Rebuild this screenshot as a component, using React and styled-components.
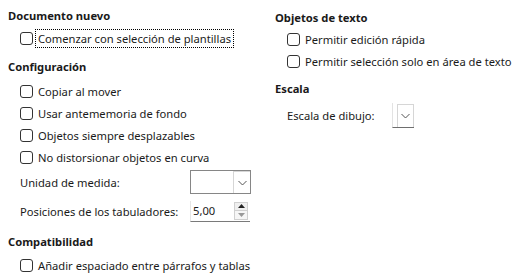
import React from 'react';
import styled, { createGlobalStyle } from 'styled-components';

const GlobalStyle = createGlobalStyle`
  html, body {
    margin: 0;
    padding: 0;
    background: #ffffff;
  }
  body {
    font-family: 'Noto Sans', 'Open Sans', sans-serif;
    font-size: 11.2px;
    color: #1a1a1a;
  }
`;

const Page = styled.div`
  width: 520px;
  height: 280px;
  display: grid;
  grid-template-columns: 267px 1fr;
  padding: 7px 0 0 8px;
  box-sizing: border-box;
  overflow: hidden;
`;

const Column = styled.div`
  display: flex;
  flex-direction: column;
  padding-top: ${(p) => p.top || 0}px;
`;

const Section = styled.div`
  display: flex;
  flex-direction: column;
  margin-bottom: ${(p) => p.gap || 0}px;
`;

const Heading = styled.div`
  font-weight: bold;
  height: 17px;
  line-height: 17px;
  margin-bottom: ${(p) => p.after}px;
`;

const Row = styled.label`
  display: flex;
  align-items: center;
  height: 22px;
  padding-left: 12px;
  white-space: nowrap;
`;

const Box = styled.span`
  width: 11px;
  height: 11px;
  border: 1px solid #333333;
  border-radius: 3px;
  background: #ffffff;
  margin-right: 4px;
  flex: none;
`;

const Caption = styled.span`
  padding: 0 1px;
  outline: ${(p) => (p.focused ? '1px dotted #000' : 'none')};
  outline-offset: 1px;
`;

const FieldRow = styled.div`
  display: flex;
  align-items: center;
  height: ${(p) => p.h}px;
  padding-left: 12px;
  white-space: nowrap;
`;

const FieldLabel = styled.span`
  width: ${(p) => p.w}px;
  flex: none;
`;

// full combo has a grey frame; the flat one only a light left edge and a dark underline
const Combo = styled.div`
  width: ${(p) => p.w}px;
  height: ${(p) => p.h}px;
  box-sizing: border-box;
  background: #ffffff;
  display: flex;
  justify-content: flex-end;
  align-items: ${(p) => (p.flat ? 'flex-end' : 'stretch')};
  border: 1px solid #868686;
  ${(p) =>
    p.flat &&
    `
    border: none;
    border-left: 1px solid #e3e3e3;
    border-bottom: 1px solid #6e6e6e;
  `}
`;

const ComboButton = styled.div`
  width: ${(p) => (p.flat ? 17 : 17)}px;
  height: ${(p) => (p.flat ? '23px' : '100%')};
  box-sizing: border-box;
  border: 1px solid #d6d6d6;
  border-right: ${(p) => (p.flat ? '1px solid #d6d6d6' : 'none')};
  border-bottom: none;
  background: #ffffff;
  display: flex;
  align-items: center;
  justify-content: center;
`;

const Spin = styled.div`
  width: 60px;
  height: 21px;
  box-sizing: border-box;
  border-left: 1px solid #e6e6e6;
  border-bottom: 1px solid #7a7a7a;
  display: flex;
  align-items: center;
`;

const SpinValue = styled.span`
  flex: 1;
  padding-left: 2px;
`;

const SpinButtons = styled.div`
  display: flex;
  flex-direction: column;
  width: 14px;
  margin-right: 2px;
`;

const SpinButton = styled.div`
  height: 9px;
  box-sizing: border-box;
  border: 1px solid #d0d0d0;
  background: ${(p) => (p.light ? '#f6f6f6' : '#efefef')};
  display: flex;
  align-items: center;
  justify-content: center;
  & + & {
    border-top: none;
  }
`;

const Chevron = () => (
  <svg width="9" height="6" viewBox="0 0 9 6">
    <path d="M0.5 1 L4.5 5 L8.5 1" fill="none" stroke="#555" strokeWidth="1" />
  </svg>
);

const Arrow = ({ up, color }) => (
  <svg width="7" height="4" viewBox="0 0 7 4">
    <path d={up ? 'M0 4 L3.5 0 L7 4 Z' : 'M0 0 L3.5 4 L7 0 Z'} fill={color} />
  </svg>
);

const Check = ({ children, focused }) => (
  <Row>
    <Box />
    <Caption focused={focused}>{children}</Caption>
  </Row>
);

const App = () => (
  <>
    <GlobalStyle />
    <Page>
      <Column>
        <Section gap={9}>
          <Heading after={3}>Documento nuevo</Heading>
          <Check focused>Comenzar con selección de plantillas</Check>
        </Section>
        <Section gap={7}>
          <Heading after={5}>Configuración</Heading>
          <Check>Copiar al mover</Check>
          <Check>Usar antememoria de fondo</Check>
          <Check>Objetos siempre desplazables</Check>
          <Check>No distorsionar objetos en curva</Check>
          <FieldRow h={28}>
            <FieldLabel w={170}>Unidad de medida:</FieldLabel>
            <Combo w={61} h={24}>
              <ComboButton>
                <Chevron />
              </ComboButton>
            </Combo>
          </FieldRow>
          <FieldRow h={30}>
            <FieldLabel w={170}>Posiciones de los tabuladores:</FieldLabel>
            <Spin>
              <SpinValue>5,00</SpinValue>
              <SpinButtons>
                <SpinButton>
                  <Arrow up color="#222" />
                </SpinButton>
                <SpinButton light>
                  <Arrow color="#999" />
                </SpinButton>
              </SpinButtons>
            </Spin>
          </FieldRow>
        </Section>
        <Section>
          <Heading after={4}>Compatibilidad</Heading>
          <Check>Añadir espaciado entre párrafos y tablas</Check>
        </Section>
      </Column>
      <Column top={2}>
        <Section gap={8}>
          <Heading after={2}>Objetos de texto</Heading>
          <Check>Permitir edición rápida</Check>
          <Check>Permitir selección solo en área de texto</Check>
        </Section>
        <Section>
          <Heading after={2}>Escala</Heading>
          <FieldRow h={32}>
            <FieldLabel w={105}>Escala de dibujo:</FieldLabel>
            <Combo flat w={22} h={25}>
              <ComboButton flat>
                <Chevron />
              </ComboButton>
            </Combo>
          </FieldRow>
        </Section>
      </Column>
    </Page>
  </>
);

export default App;
